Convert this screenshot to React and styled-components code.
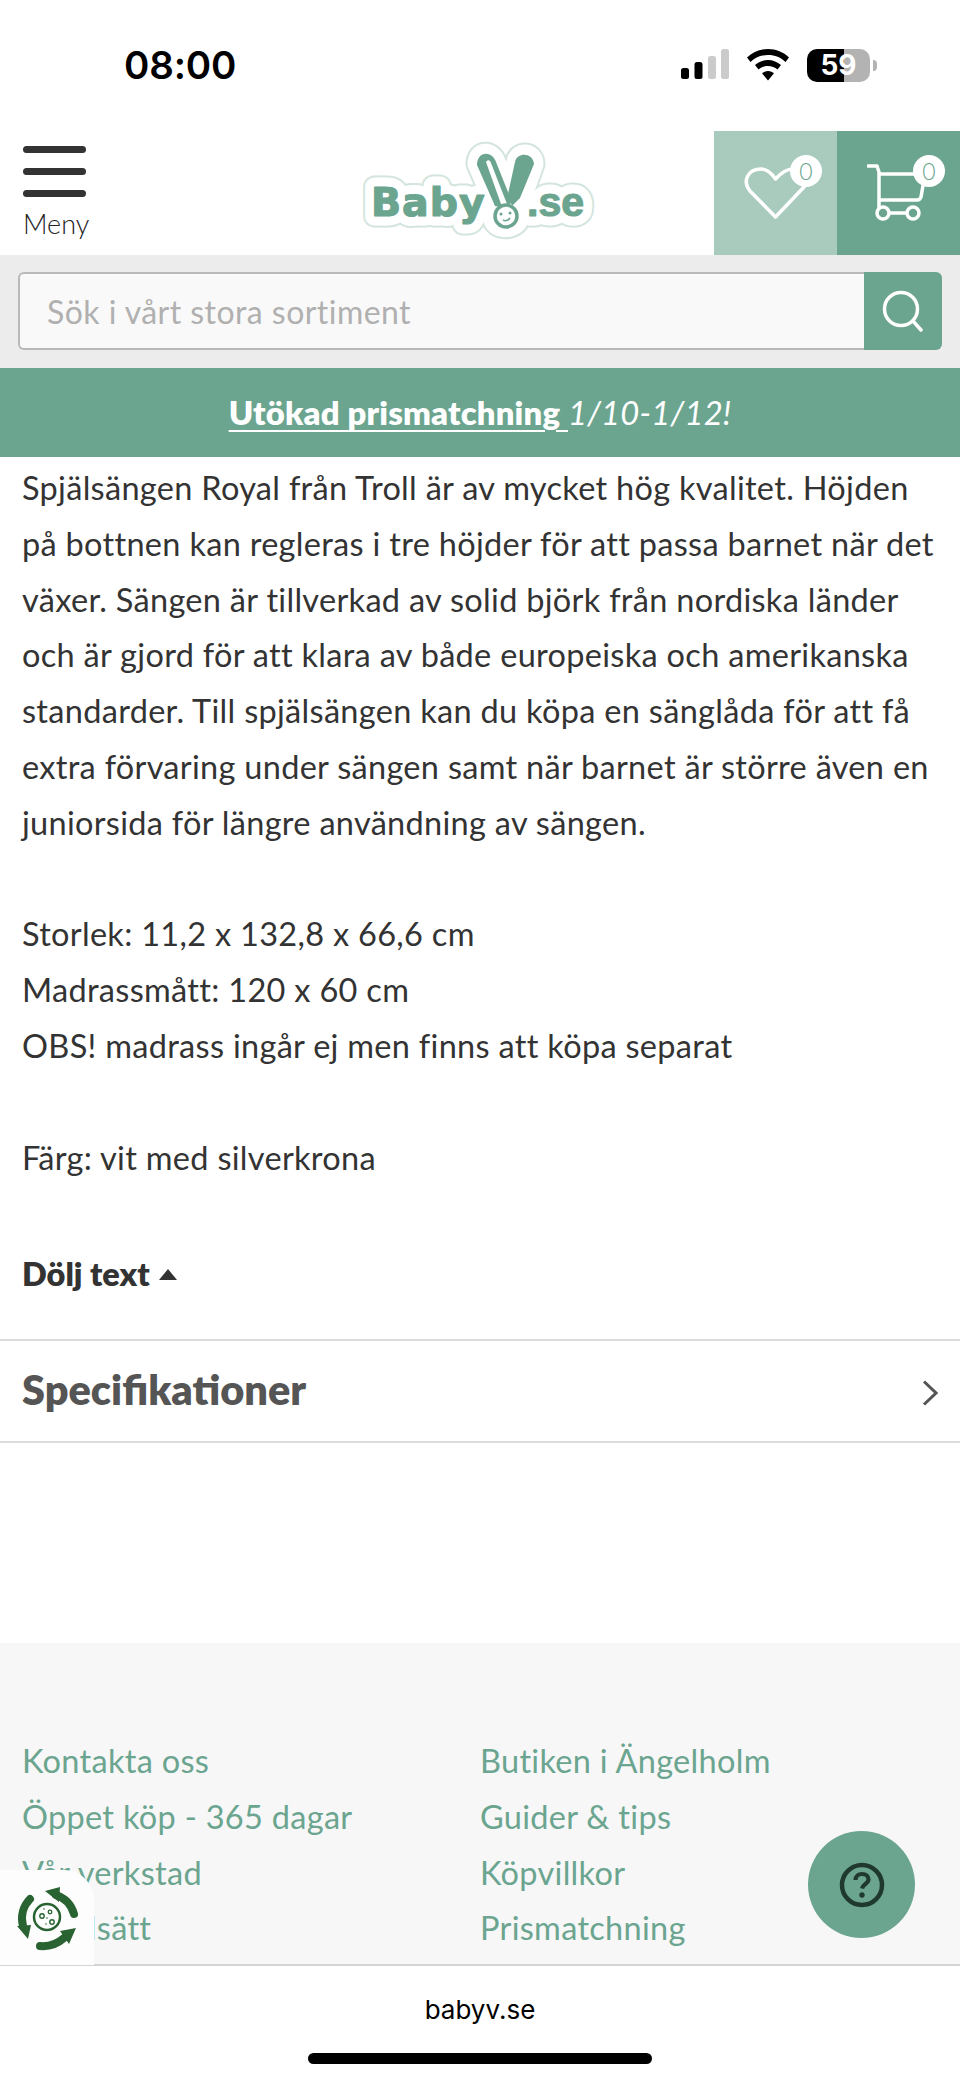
import React from "react";
import styled, { createGlobalStyle } from "styled-components";

const Global = createGlobalStyle`
  html, body { margin: 0; padding: 0; background: #fff; }
  * { box-sizing: border-box; }
`;
const GREEN = "#6ba58f";
const FONT = `"Lato", "Noto Sans", sans-serif`;

const Page = styled.div`
  width: 960px; height: 2081px; position: relative; overflow: hidden;
  display: flex; flex-direction: column; background: #fff; font-family: ${FONT}; color: #333;
`;
const StatusBar = styled.div`
  height: 131px; flex: none; display: flex; align-items: center; justify-content: space-between;
  padding: 0 90px 1px 124px;
`;
const Time = styled.div`
  font-family: "Inter", sans-serif; font-weight: 600; font-size: 38.5px; color: #000; letter-spacing: -0.2px; line-height: 1;
`;
const StatusIcons = styled.div`display: flex; align-items: center; gap: 17px;`;
const Battery = styled.div`
  width: 63px; height: 33px; border-radius: 10px; position: relative;
  background: linear-gradient(to right, #000 59%, #b3b3b3 59%);
  display: flex; align-items: center; justify-content: center;
  font-family: "Inter", sans-serif; font-weight: 700; font-size: 28px; color: #fff; line-height: 1;
  &::after { content: ""; position: absolute; right: -7px; top: 11px; width: 4px; height: 11px; border-radius: 0 4px 4px 0; background: #b3b3b3; }
`;
const Header = styled.div`height: 124px; flex: none; display: flex; align-items: stretch;`;
const MenuBlock = styled.div`
  width: 140px; flex: none; padding: 15px 0 0 23px; display: flex; flex-direction: column;
`;
const Bar = styled.div`width: 63px; height: 7px; border-radius: 4px; background: #333; margin-bottom: 15px;`;
const MenuLabel = styled.div`font-size: 27px; font-weight: 300; line-height: 32px; margin-top: -4px; color: #222;`;
const LogoBlock = styled.div`flex: 1; display: flex; justify-content: flex-start; align-items: flex-start; padding-left: 200px;`;
const IconTile = styled.div`
  width: ${p => p.$w}px; flex: none; background: ${p => p.$bg}; position: relative; display: flex; align-items: center; justify-content: center;
`;
const Count = styled.div`
  position: absolute; width: 32px; height: 32px; border-radius: 50%; background: #fff; color: ${GREEN};
  top: 24px; right: ${p => p.$right}px; display: flex; align-items: center; justify-content: center;
  font-size: 23px; font-weight: 300; line-height: 1; font-family: "Lato", sans-serif;
`;
const SearchBand = styled.div`height: 113px; flex: none; background: #ececec; padding: 17px 18px 18px; display: flex;`;
const SearchInput = styled.div`
  flex: 1; background: #f9f9f9; border: 2px solid #b9b9b9; border-right: none; border-radius: 6px 0 0 6px;
  padding-left: 27px; display: flex; align-items: center; font-size: 32px; letter-spacing: 0.45px; font-weight: 400; color: #b0b0b0;
`;
const SearchBtn = styled.div`
  width: 78px; flex: none; background: ${GREEN}; border-radius: 0 6px 6px 0; display: flex; align-items: center; justify-content: center;
`;
const Banner = styled.div`
  height: 89px; flex: none; background: ${GREEN}; color: #fff; display: flex; align-items: center; justify-content: center;
  font-size: 32.8px; letter-spacing: 0.2px; white-space: pre;
`;
const BannerLink = styled.span`font-weight: 800; text-decoration: underline; text-underline-offset: 5px; text-decoration-thickness: 2px;`;
const BannerNote = styled.span`font-style: italic; font-weight: 400;`;
const Body = styled.div`padding: 3px 22px 0; height: 882px; flex: none;`;
const Para = styled.p`margin: 0; font-size: 32.5px; line-height: 55.8px; color: #333; white-space: pre; letter-spacing: 0.3px;`;
const Toggle = styled.div`
  margin-top: 61px; font-size: 32.5px; font-weight: 800; line-height: 56px; color: #333; display: flex; align-items: center; gap: 9px;
`;
const Triangle = styled.span`
  width: 0; height: 0; border-left: 9px solid transparent; border-right: 9px solid transparent; border-bottom: 11px solid #333;
`;
const Accordion = styled.div`
  height: 104px; flex: none; border-top: 2px solid #dcdcdc; border-bottom: 2px solid #dcdcdc; padding: 0 22px 4px;
  display: flex; align-items: center; justify-content: space-between;
`;
const AccTitle = styled.div`font-size: 41.5px; font-weight: 800; color: #555;`;
const Chevron = styled.svg`margin-top: 7px;`;
const Spacer = styled.div`height: 200px; flex: none;`;
const Footer = styled.div`
  height: 323px; flex: none; background: #f7f7f7; border-bottom: 2px solid #d4d4d4; overflow: hidden;
  padding: 90px 22px 0; display: grid; grid-template-columns: 458px 1fr;
`;
const FooterCol = styled.div`display: flex; flex-direction: column;`;
const FooterLink = styled.div`font-size: 32.5px; letter-spacing: 0.3px; line-height: 55.8px; color: ${GREEN};`;
const SafariBar = styled.div`flex: 1; background: #fff; display: flex; flex-direction: column; align-items: center;`;
const Url = styled.div`
  font-family: "Inter", sans-serif; font-size: 26px; color: #000; line-height: 32px; margin-top: 28px;
`;
const HomeBar = styled.div`width: 344px; height: 11px; border-radius: 6px; background: #000; margin-top: 27px;`;
const Fab = styled.div`
  position: absolute; left: 808px; top: 1831px; width: 107px; height: 107px; border-radius: 50%; background: ${GREEN};
  display: flex; align-items: center; justify-content: center;
`;
const CookieTile = styled.div`
  position: absolute; left: 0; top: 1870px; width: 94px; height: 95px; background: #fdfdfd; border-radius: 0 30px 0 0;
`;

const Logo = () => {
  const words = (extra) => (
    <>
      <text x="31" y="86" fontFamily="DejaVu Sans, sans-serif" fontWeight="700" fontSize="39.5" letterSpacing="1" {...extra}>Baby</text>
      <text x="187" y="86" fontFamily="Liberation Sans, sans-serif" fontWeight="700" fontSize="41" {...extra}>.se</text>
    </>
  );
  return (
    <svg width="280" height="120" viewBox="0 0 280 120" style={{ marginTop: -1 }}>
      <g strokeLinejoin="round">
        {[["#d3e5dd", 23], ["#fff", 19]].map(([c, w]) => (
          <g key={c} fill={c} stroke={c} strokeWidth={w}>
            {words({})}
            <path d="M137 34 C137 20 152 20 156 32 L170 62 L176 32 C178 20 194 22 194 34 L180 74 L178 92 C172 100 156 100 153 90 L155 76 Z" />
          </g>
        ))}
        {words({ fill: GREEN, stroke: GREEN, strokeWidth: 1.2 })}
      </g>
      <path d="M137 35 C137 21 152 20 156 32 L172 72 L166 78 L155 76 Z" fill={GREEN} />
      <path d="M146 32 C148 29 150 30 151 33 L167 74 L161 74 Z" fill="#fff" />
      <path d="M175 32 C177 22 193 22 194 34 L180 68 L172 76 L168 64 Z" fill={GREEN} />
      <circle cx="166" cy="86" r="11" fill="#fff" stroke={GREEN} strokeWidth="3.5" />
      <circle cx="161" cy="84" r="1.5" fill={GREEN} />
      <circle cx="170" cy="83" r="1.5" fill={GREEN} />
      <path d="M163 90 Q167 92 170 88" fill="none" stroke={GREEN} strokeWidth="1.5" />
    </svg>
  );
};

const Recycle = () => (
  <svg width="94" height="95" viewBox="0 10 94 95">
    <g fill="none" stroke="#2a6332" strokeWidth="8" strokeLinecap="round">
      <path d="M74 54 A28 28 0 0 0 56 35" />
      <path d="M30 39 A28 28 0 0 0 23 66" />
      <path d="M40 86 A32 32 0 0 0 64 78" />
    </g>
    <g fill="#2a6332">
      <polygon points="45,31 60,27 59,42" />
      <polygon points="17,66 31,65 28,79" />
      <polygon points="60,71 76,68 69,84" />
    </g>
    <circle cx="47" cy="57" r="13" fill="none" stroke="#2a6332" strokeWidth="2.5" />
    <circle cx="42" cy="56" r="2.2" fill="none" stroke="#2a6332" strokeWidth="1.4" />
    <circle cx="50" cy="52" r="1.8" fill="none" stroke="#2a6332" strokeWidth="1.3" />
    <circle cx="52" cy="62" r="2.2" fill="none" stroke="#2a6332" strokeWidth="1.4" />
    <circle cx="46" cy="64" r="0.8" fill="#2a6332" />
    <circle cx="47" cy="58" r="0.8" fill="#2a6332" />
    <circle cx="44" cy="49" r="0.8" fill="#2a6332" />
  </svg>
);

const description = `Spjälsängen Royal från Troll är av mycket hög kvalitet. Höjden
på bottnen kan regleras i tre höjder för att passa barnet när det
växer. Sängen är tillverkad av solid björk från nordiska länder
och är gjord för att klara av både europeiska och amerikanska
standarder. Till spjälsängen kan du köpa en sänglåda för att få
extra förvaring under sängen samt när barnet är större även en
juniorsida för längre användning av sängen.

Storlek: 11,2 x 132,8 x 66,6 cm
Madrassmått: 120 x 60 cm
OBS! madrass ingår ej men finns att köpa separat

Färg: vit med silverkrona`;

export default function App() {
  return (
    <Page>
      <Global />
      <StatusBar>
        <Time>08:00</Time>
        <StatusIcons>
          <svg width="48" height="32" viewBox="0 0 48 32">
            <rect x="0" y="19" width="8" height="11" rx="2.5" fill="#000" />
            <rect x="13.5" y="13" width="8" height="17" rx="2.5" fill="#000" />
            <rect x="27" y="7" width="8" height="23" rx="2.5" fill="#cbcbcb" />
            <rect x="40" y="0" width="8" height="30" rx="2.5" fill="#cbcbcb" />
          </svg>
          <svg width="44" height="32" viewBox="0 0 44 32">
            <path d="M22 0 C30 0 37.500 3 43 8.500 L39.500 13 C35 8.500 29 6 22 6 C15 6 9 8.500 4.500 13 L1 8.500 C6.500 3 14 0 22 0 Z" fill="#000" />
            <path d="M22 11 C27 11 31.500 13 35 16 L31.500 20.500 C29 18.500 25.500 17 22 17 C18.500 17 15 18.500 12.500 20.500 L9 16 C12.500 13 17 11 22 11 Z" fill="#000" />
            <path d="M22 22 C24.500 22 26.500 23 28 24.300 L22 31.500 L16 24.300 C17.500 23 19.500 22 22 22 Z" fill="#000" />
          </svg>
          <Battery>59</Battery>
        </StatusIcons>
      </StatusBar>

      <Header>
        <MenuBlock>
          <Bar /><Bar /><Bar />
          <MenuLabel>Meny</MenuLabel>
        </MenuBlock>
        <LogoBlock><Logo /></LogoBlock>
        <IconTile $w={123} $bg="#a9cbbe">
          <svg width="64" height="56" viewBox="0 0 64 56" style={{ marginRight: 2 }}>
            <path d="M32.500 52 L7 26 C-1 16 5 4 18 4 C25 4 29 9 32.500 14 C37 9 43 4 50 4 C58 4 62 12 61 22 L32.500 52 Z" fill="none" stroke="#fff" strokeWidth="3.500" strokeLinejoin="round" />
          </svg>
          <Count $right={15}>0</Count>
        </IconTile>
        <IconTile $w={123} $bg={GREEN}>
          <svg width="62" height="62" viewBox="0 0 62 62" style={{ marginRight: 1, marginTop: 4 }}>
            <path d="M1 2 H10 L12 8 V49 M12 10 H58 L54 33 Q53 36 50 36 H12 M16 49 H46" fill="none" stroke="#fff" strokeWidth="3.500" strokeLinejoin="round" strokeLinecap="round" />
            <circle cx="16" cy="49" r="6" fill={GREEN} stroke="#fff" strokeWidth="3.500" />
            <circle cx="46" cy="49" r="6" fill={GREEN} stroke="#fff" strokeWidth="3.500" />
          </svg>
          <Count $right={15}>0</Count>
        </IconTile>
      </Header>

      <SearchBand>
        <SearchInput>Sök i vårt stora sortiment</SearchInput>
        <SearchBtn>
          <svg width="42" height="42" viewBox="0 0 42 42">
            <circle cx="19" cy="19" r="16.500" fill="none" stroke="#fff" strokeWidth="3.500" />
            <path d="M31 31 L39 40" stroke="#fff" strokeWidth="3.500" strokeLinecap="round" />
          </svg>
        </SearchBtn>
      </SearchBand>

      <Banner>
        <BannerLink>Utökad prismatchning </BannerLink>
        <BannerNote>1/10-1/12!</BannerNote>
      </Banner>

      <Body>
        <Para>{description}</Para>
        <Toggle>Dölj text <Triangle /></Toggle>
      </Body>

      <Accordion>
        <AccTitle>Specifikationer</AccTitle>
        <Chevron width="16" height="26" viewBox="0 0 16 26">
          <path d="M2 1.500 L14 13 L2 24.500" fill="none" stroke="#555" strokeWidth="3" />
        </Chevron>
      </Accordion>

      <Spacer />

      <Footer>
        <FooterCol>
          <FooterLink>Kontakta oss</FooterLink>
          <FooterLink>Öppet köp - 365 dagar</FooterLink>
          <FooterLink>Vår verkstad</FooterLink>
          <FooterLink>Betalsätt</FooterLink>
        </FooterCol>
        <FooterCol>
          <FooterLink>Butiken i Ängelholm</FooterLink>
          <FooterLink>Guider &amp; tips</FooterLink>
          <FooterLink>Köpvillkor</FooterLink>
          <FooterLink>Prismatchning</FooterLink>
        </FooterCol>
      </Footer>

      <SafariBar>
        <Url>babyv.se</Url>
        <HomeBar />
      </SafariBar>

      <CookieTile><Recycle /></CookieTile>
      <Fab>
        <svg width="46" height="46" viewBox="0 0 46 46">
          <circle cx="23" cy="23" r="20" fill="none" stroke="#20392f" strokeWidth="4.500" />
          <path d="M16.500 18 C16.500 14 19.500 12 23 12 C27 12 29.500 14.500 29.500 17.500 C29.500 21.500 24 22 23 26.500" fill="none" stroke="#20392f" strokeWidth="4.200" />
          <circle cx="23" cy="33" r="2.700" fill="#20392f" />
        </svg>
      </Fab>
    </Page>
  );
}
